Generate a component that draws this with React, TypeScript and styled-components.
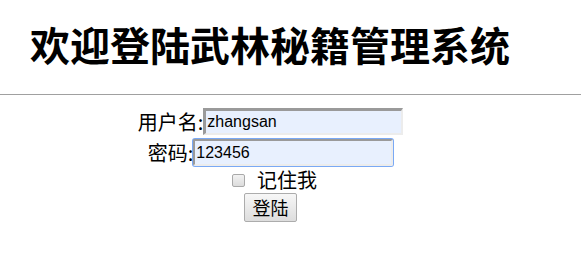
import React from 'react';
import styled, { createGlobalStyle } from 'styled-components';

const GlobalStyle = createGlobalStyle`
    body {
        margin: 0;
        background: #ffffff;
        color: #000000;
        font-family: "Noto Sans CJK SC", "Liberation Sans", sans-serif;
    }
`;

const Title = styled.h1`
    margin: 19px 0 0 30px;
    font-size: 40px;
    line-height: 50px;
    font-weight: 700;
    letter-spacing: 0;
`;

const Divider = styled.hr`
    margin: 25px 0 0 0;
    height: 0;
    border: none;
    border-top: 1px solid #a0a0a0;
`;

const Form = styled.form`
    width: 541px;
    padding-top: 12px;
    display: flex;
    flex-direction: column;
    align-items: center;
`;

const Row = styled.div<{ $top?: number; $shift?: number }>`
    display: flex;
    align-items: center;
    justify-content: center;
    margin-top: ${(p) => p.$top ?? 0}px;
    padding-left: ${(p) => p.$shift ?? 0}px;
`;

const Label = styled.label`
    font-size: 20px;
    line-height: 27px;
    white-space: nowrap;
`;

const TextInput = styled.input<{ $focused?: boolean }>`
    box-sizing: border-box;
    width: 200px;
    height: 27px;
    margin: 0;
    padding: 0 0 0 1px;
    border-style: solid;
    border-width: ${(p) => (p.$focused ? '2px' : '3px 2px 2px 3px')};
    border-color: #9a9a9a #ececec #ececec #9a9a9a;
    border-radius: ${(p) => (p.$focused ? '2px' : '0')};
    background: #e8f0fe;
    font-family: "Liberation Sans", Arial, sans-serif;
    font-size: 16px;
    color: #000000;
    outline: none;
    box-shadow: ${(p) => (p.$focused ? '0 0 0 1px #7aa9f5' : 'none')};
`;

const Check = styled.input`
    appearance: none;
    box-sizing: border-box;
    width: 13px;
    height: 13px;
    margin: 0 12px 0 0;
    border: 1px solid #a9a9a9;
    border-radius: 2px;
    background: linear-gradient(#f2f2f2, #dcdcdc);
`;

const CheckText = styled.span`
    font-size: 20px;
    line-height: 22px;
`;

const SubmitButton = styled.button`
    box-sizing: border-box;
    width: 53px;
    height: 29px;
    padding: 0;
    border: 1px solid #acacac;
    border-radius: 2px;
    background: linear-gradient(#f7f7f7, #dddddd);
    font-family: "Noto Sans CJK SC", sans-serif;
    font-size: 18px;
    line-height: 27px;
    color: #000000;
`;

const App = () => {
    return (
        <>
            <GlobalStyle />
            <Title>欢迎登陆武林秘籍管理系统</Title>
            <Divider />
            <Form onSubmit={(e) => e.preventDefault()}>
                <Row $top={1}>
                    <Label htmlFor="username">用户名:</Label>
                    <TextInput id="username" defaultValue="zhangsan" />
                </Row>
                <Row $top={4}>
                    <Label htmlFor="password">密码:</Label>
                    <TextInput id="password" defaultValue="123456" $focused />
                </Row>
                <Row $top={3} $shift={8}>
                    <Check type="checkbox" id="remember" />
                    <CheckText>记住我</CheckText>
                </Row>
                <Row $top={2}>
                    <SubmitButton type="submit">登陆</SubmitButton>
                </Row>
            </Form>
        </>
    );
};

export default App;
